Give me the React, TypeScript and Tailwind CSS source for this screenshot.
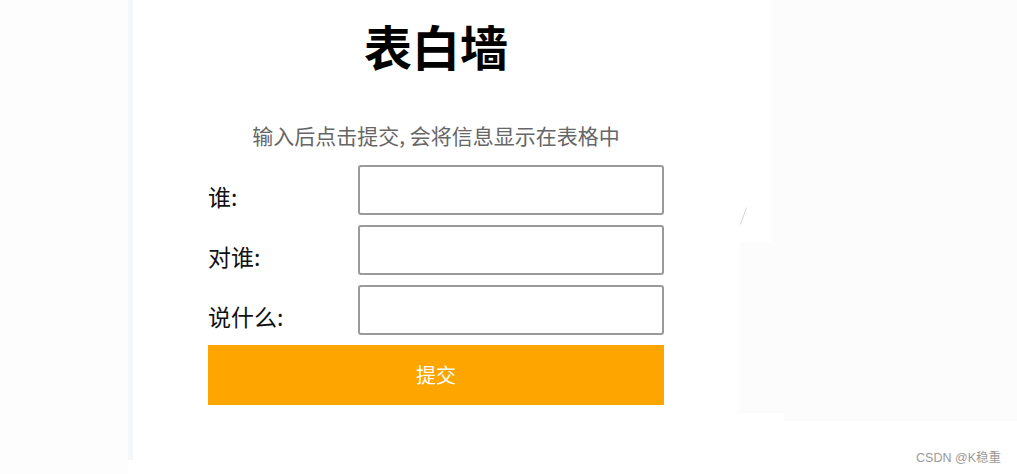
import React from "react";

const fields = ["谁:", "对谁:", "说什么:"];

const App: React.FC = () => {
  return (
    <div
      className="relative flex h-[474px] w-[1017px] overflow-hidden bg-white"
      style={{ fontFamily: '"Noto Sans CJK SC", "Noto Sans", sans-serif' }}
    >
      <div className="h-full w-[128px] bg-[#fdfdfd]" />
      <div className="h-[460px] w-[5px] bg-[#f6f7f9]" />

      <main className="flex w-[606px] flex-col items-center pt-[15px]">
        <h1 className="text-[48px] leading-[60px] font-bold text-black">表白墙</h1>
        <p className="mt-[46px] text-[21px] leading-[28px] text-[#666666]">
          输入后点击提交, 会将信息显示在表格中
        </p>
        <form className="mt-[16px] flex w-[456px] flex-col gap-[10px]">
          {fields.map((f, i) => (
            <div key={i} className="flex h-[50px] items-center">
              <label className="w-[150px] pt-[12px] text-[23px] leading-[30px] text-[#111111]">
                {f}
              </label>
              <input
                type="text"
                className="h-[50px] w-[306px] rounded-[3px] border-2 border-[#9a9a9a] bg-white outline-none"
              />
            </div>
          ))}
          <button
            type="button"
            className="h-[60px] w-[456px] bg-[#ffa500] text-[20px] text-white"
          >
            提交
          </button>
        </form>
      </main>

      <div className="flex flex-1 flex-col">
        <div className="flex h-[242px]">
          <div className="relative w-[32px] bg-white">
            <div className="absolute left-[4px] top-[207px] h-[18px] w-[1px] rotate-[20deg] bg-[#d8d8d8]" />
          </div>
          <div className="flex-1 bg-[#fcfcfc]" />
        </div>
        <div className="h-[171px] bg-[#fcfcfc]" />
        <div className="flex h-[8px]">
          <div className="w-[45px] bg-white" />
          <div className="flex-1 bg-[#fcfcfc]" />
        </div>
      </div>

      <span
        className="absolute right-[16px] top-[449px] text-[12.5px] leading-[18px] text-[#9a9a9a]"
        style={{ fontFamily: '"Liberation Sans", "Noto Sans CJK SC", sans-serif' }}
      >
        CSDN @K稳重
      </span>
    </div>
  );
};

export default App;
